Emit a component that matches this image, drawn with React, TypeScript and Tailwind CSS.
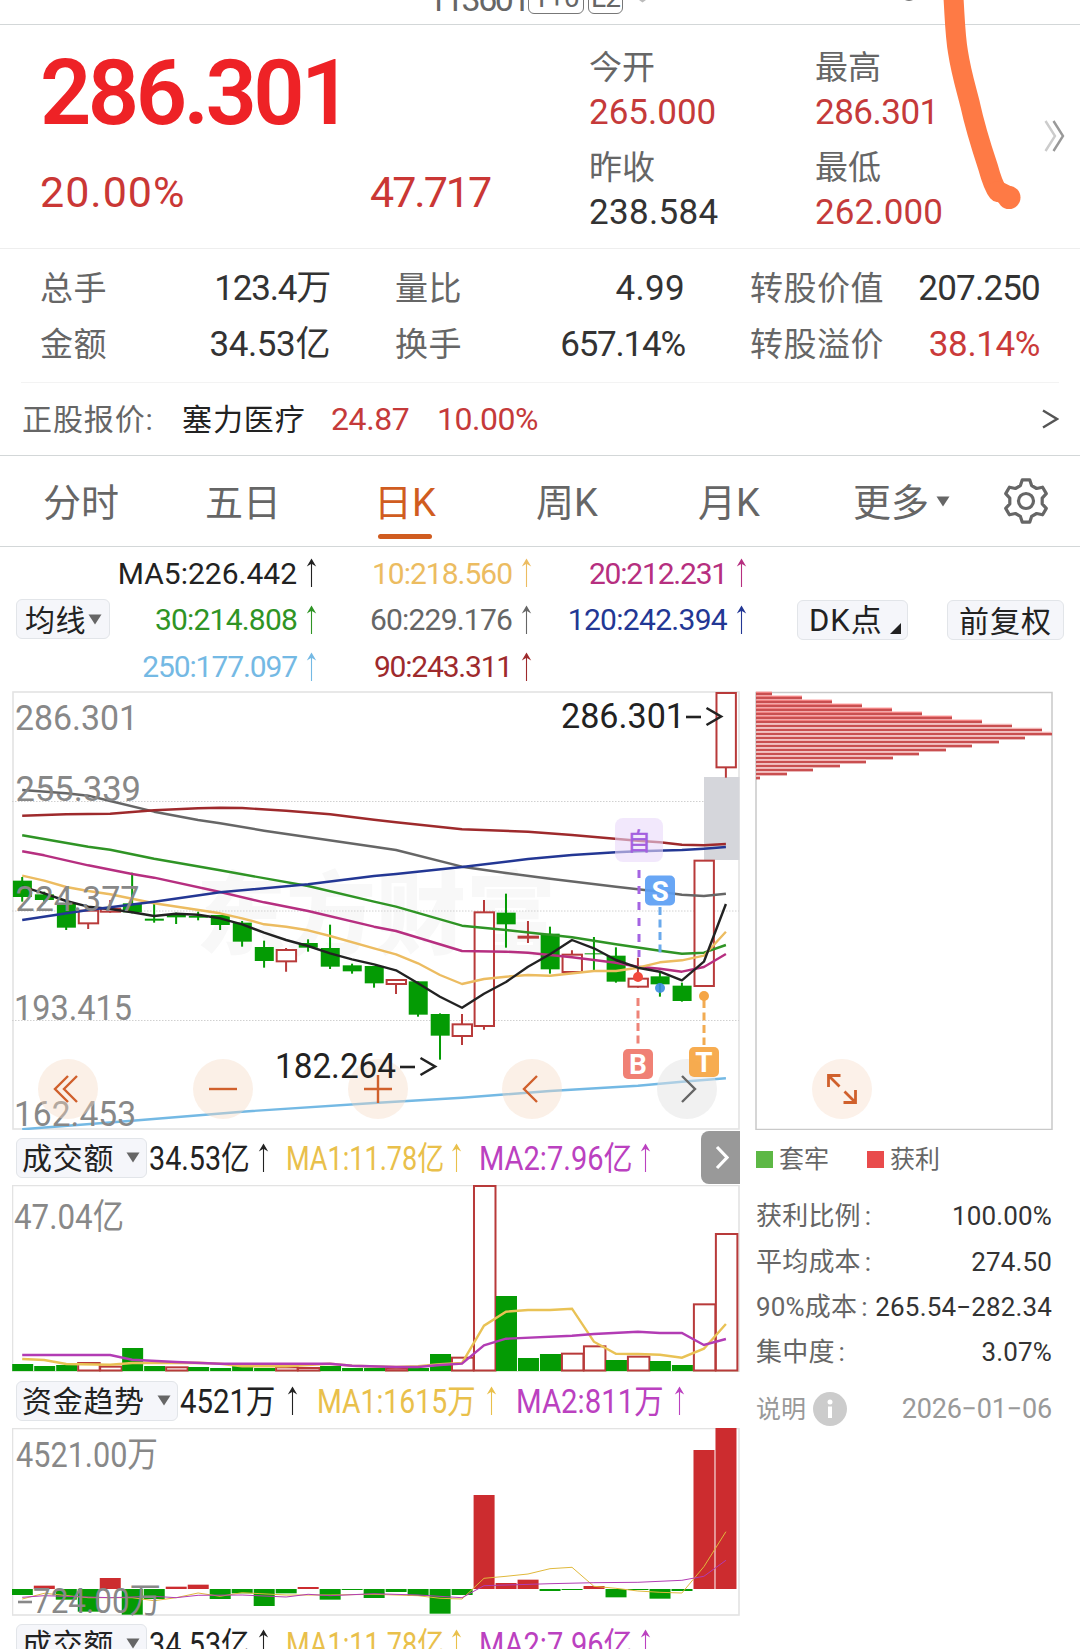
import React from 'react';

const X0 = 22.2;
const STEP = 21.99;
const cx = (i: number) => X0 + STEP * i;

type Candle = [color: 'g' | 'r', top: number, bottom: number, high: number, low: number];
type Point = [index: number, y: number];

const CANDLES: Candle[] = [
    ['g', 587, 636, 576, 650], ['g', 628, 645, 620, 655], ['g', 656, 728, 650, 735], ['r', 677, 715, 677, 732],
    ['r', 671, 680, 645, 683], ['g', 655, 682, 563, 685], ['g', 701, 707, 657, 713], ['g', 688, 697, 683, 717],
    ['g', 693, 698, 680, 706], ['g', 690, 720, 690, 735], ['g', 713, 770, 708, 785], ['g', 786, 828, 767, 848],
    ['r', 795, 829, 789, 860], ['g', 774, 788, 763, 800], ['g', 789, 845, 719, 852], ['g', 841, 859, 836, 866],
    ['g', 843, 895, 843, 908], ['r', 885, 897, 885, 927], ['g', 889, 989, 889, 995], ['g', 987, 1052, 985, 1124],
    ['r', 1018, 1053, 987, 1080], ['r', 682, 1023, 645, 1034], ['g', 683, 718, 626, 788], ['r', 755, 758, 708, 774],
    ['g', 746, 853, 725, 866], ['r', 809, 861, 796, 866], ['g', 805, 808, 756, 855], ['g', 812, 890, 787, 893],
    ['r', 881, 905, 818, 908], ['g', 874, 898, 860, 935], ['g', 902, 948, 893, 950], ['r', 527, 903, 527, 903],
    ['r', 24, 247, 24, 278],
];

const MA_LINES: { color: string; points: Point[] }[] = [
    { color: '#666666', points: [[0, 315], [2, 325], [3, 332], [4, 348], [6, 380], [8, 405], [9, 415], [11, 437], [16, 485], [17, 495], [20, 545], [22, 564], [24, 581], [27, 605], [29, 620], [30, 629], [31, 633], [32, 626]] },
    { color: '#9e2a2c', points: [[0, 392], [2, 388], [4, 386], [6, 376], [8, 370], [9, 368], [10, 369], [12, 377], [14, 388], [16, 404], [17, 412], [20, 433], [23, 440], [25, 450], [28, 467], [29, 472], [30, 479], [31, 481], [32, 477]] },
    { color: '#2f9425', points: [[0, 451], [3, 485], [4, 494], [6, 521], [9, 556], [13, 603], [16, 650], [17, 665], [20, 722], [22, 735], [25, 757], [27, 778], [29, 797], [30, 806], [31, 803], [32, 780]] },
    { color: '#b62f80', points: [[0, 499], [1, 511], [3, 541], [5, 567], [6, 578], [9, 621], [11, 652], [13, 678], [16, 725], [17, 738], [20, 798], [22, 800], [23, 803], [25, 817], [27, 833], [28, 845], [29, 851], [30, 860], [31, 846], [32, 807]] },
    { color: '#ecbc61', points: [[0, 572], [1, 587], [2, 606], [3, 618], [4, 628], [6, 655], [9, 685], [10, 700], [11, 718], [12, 725], [13, 736], [14, 753], [16, 790], [17, 808], [18, 835], [19, 870], [20, 897], [21, 882], [22, 875], [23, 870], [24, 872], [26, 858], [27, 858], [28, 848], [29, 832], [30, 826], [31, 812], [32, 740]] },
    { color: '#222222', points: [[0, 605], [1, 625], [2, 648], [3, 665], [4, 672], [5, 682], [6, 693], [7, 686], [8, 689], [9, 700], [10, 718], [11, 743], [12, 765], [13, 783], [14, 805], [15, 823], [16, 838], [17, 856], [18, 895], [19, 935], [20, 968], [21, 926], [22, 891], [23, 845], [24, 808], [25, 765], [26, 790], [27, 825], [28, 848], [29, 860], [30, 886], [31, 830], [32, 657]] },
    { color: '#233794', points: [[0, 705], [3, 675], [6, 650], [9, 622], [13, 598], [16, 573], [17, 567], [20, 546], [23, 522], [25, 510], [27, 502], [28, 499], [30, 495], [31, 491], [32, 486]] },
    { color: '#74b9e4', points: [[0, 1333], [5, 1307], [10, 1280], [16, 1254], [20, 1238], [24, 1218], [28, 1202], [30, 1190], [32, 1180]] },
];

const VOLUMES: ['g' | 'r', number][] = [
    ['g', 717], ['g', 723], ['g', 720], ['r', 711], ['r', 722], ['g', 669], ['g', 723], ['r', 724], ['g', 726], ['g', 729], ['g', 723],
    ['g', 729], ['r', 724], ['r', 726], ['g', 723], ['g', 729], ['g', 729], ['r', 727], ['g', 729], ['g', 687], ['r', 695], ['r', 180],
    ['g', 513], ['g', 699], ['g', 687], ['r', 683], ['r', 661], ['g', 705], ['r', 692], ['g', 708], ['g', 720], ['r', 535], ['r', 324],
];

const VOLUME_MA1: Point[] = [[0, 702], [1, 705], [2, 717], [4, 719], [5, 714], [8, 713], [9, 716], [10, 724], [12, 724], [14, 716], [15, 722], [17, 726], [18, 724], [19, 718], [20, 714], [21, 602], [22, 560], [23, 555], [24, 555], [25, 551], [26, 650], [27, 686], [28, 687], [29, 689], [30, 698], [31, 671], [32, 597]];
const VOLUME_MA2: Point[] = [[0, 690], [4, 690], [5, 704], [7, 711], [9, 716], [14, 716], [15, 722], [17, 726], [18, 726], [19, 720], [20, 716], [21, 661], [22, 641], [25, 632], [26, 627], [28, 620], [29, 624], [30, 624], [31, 660], [32, 642]];

const FUNDS = [660, 632, 674, 710, 609, 719, 672, 635, 629, 672, 655, 693, 655, 636, 674, 645, 669, 651, 663, 716, 660, 360, 624, 614, 648, 644, 633, 667, 644, 671, 648, 225, 159];
const FUNDS_MA1: Point[] = [[0, 672], [1, 655], [3, 668], [5, 668], [6, 677], [7, 668], [8, 654], [9, 664], [10, 653], [12, 660], [14, 660], [16, 658], [18, 662], [19, 670], [20, 672], [21, 610], [22, 604], [23, 597], [24, 581], [25, 577], [26, 634], [27, 640], [28, 648], [29, 652], [30, 654], [31, 575], [32, 470]];
const FUNDS_MA2: Point[] = [[0, 667], [1, 662], [4, 668], [6, 664], [7, 668], [8, 661], [10, 660], [12, 666], [13, 658], [14, 662], [16, 656], [18, 660], [20, 668], [21, 632], [24, 626], [26, 623], [28, 622], [30, 616], [31, 604], [32, 556]];

const CHIP_WIDTHS = [16, 46, 76, 106, 136, 166, 196, 226, 256, 286, 296, 269, 243, 216, 190, 163, 137, 110, 84, 57, 31, 4];

const toPath = (points: Point[], base: number) => points.map(([i, y]) => `${cx(i).toFixed(1)},${(y / 3 + base).toFixed(1)}`).join(' ');

const UpArrow = ({ className = '' }: { className?: string }) => (
    <svg className={`shrink-0 ${className}`} width="13" height="30" viewBox="0 0 13 30">
        <path d="M6.5 2V29" stroke="currentColor" strokeWidth="1.1" />
        <path d="M6.5 0.5L11.2 8.5L6.5 5.8L1.8 8.5Z" fill="currentColor" />
    </svg>
);

const Caret = ({ className = '' }: { className?: string }) => (
    <svg className={`shrink-0 ${className}`} width="14" height="11" viewBox="0 0 14 11">
        <path d="M0.5 0.5H13.5L7 10.5Z" fill="#666" />
    </svg>
);

interface QuoteProps {
    label: string;
    value: string;
    className: string;
}

const Quote: React.FC<QuoteProps> = ({ label, value, className }) => (
    <div className="h-[100px]">
        <div className="h-[49px] leading-[49px] text-[33px] text-[#666]">{label}</div>
        <div className={`h-[41px] leading-[41px] text-[35px] ${className}`}>{value}</div>
    </div>
);

const Stat: React.FC<QuoteProps> = ({ label, value, className }) => (
    <div className="flex h-14 items-center justify-between whitespace-nowrap leading-[56px]">
        <span className="text-[33px] tracking-[0.5px] text-[#666]">{label}</span>
        <span className={`text-[35px] ${className}`}>{value}</span>
    </div>
);

const MaValue = ({ text, className }: { text: string; className: string }) => (
    <div className={`flex items-center justify-end whitespace-nowrap text-[30px] ${className}`}>
        <span>{text}</span>
        <UpArrow className="ml-[8px]" />
    </div>
);

interface IndicatorValue {
    text: string;
    width: string;
    scale: string;
    color: string;
}

interface IndicatorBarProps {
    title: string;
    values: IndicatorValue[];
    gap: string;
    arrowGap: string;
    expandable?: boolean;
}

const IndicatorBar: React.FC<IndicatorBarProps> = ({ title, values, gap, arrowGap, expandable }) => (
    <div className="flex h-[55px] shrink-0 items-center whitespace-nowrap">
        <button className="ml-[4px] mr-[2px] flex h-10 shrink-0 items-center gap-[12px] rounded-md border border-[#e2e5e9] bg-[#f5f6fa] pl-[5px] pr-[6px] text-[30px] tracking-[0.7px] text-[#222]">
            <span className="pt-[2px]">{title}</span>
            <Caret />
        </button>
        <div className={`flex items-center pt-px ${gap}`}>
            {values.map(v => (
                <div key={v.text} className={`flex items-center ${arrowGap} ${v.color}`}>
                    <span className={v.width}>
                        <span className={`inline-block origin-left pt-px text-[33px] leading-[40px] ${v.scale}`}>{v.text}</span>
                    </span>
                    <UpArrow />
                </div>
            ))}
        </div>
        {expandable && (
            <button className="ml-auto flex h-[53px] w-[39px] shrink-0 items-center justify-center rounded-l-lg bg-[#999]">
                <svg width="16" height="25" viewBox="0 0 16 25" fill="none">
                    <path d="M4 2L14 12.5L4 23" stroke="#fff" strokeWidth="3.2" />
                </svg>
            </button>
        )}
    </div>
);

const TURNOVER: IndicatorValue[] = [
    { text: '34.53亿', width: 'w-[101px]', scale: 'scale-x-[0.87]', color: 'text-[#222]' },
    { text: 'MA1:11.78亿', width: 'w-[157px]', scale: 'scale-x-[0.82]', color: 'text-[#e9c04b]' },
    { text: 'MA2:7.96亿', width: 'w-[153px]', scale: 'scale-x-[0.88]', color: 'text-[#bb41c0]' },
];

const FUND_TREND: IndicatorValue[] = [
    { text: '4521万', width: 'w-[96px]', scale: 'scale-x-[0.89]', color: 'text-[#222]' },
    { text: 'MA1:1615万', width: 'w-[158px]', scale: 'scale-x-[0.86]', color: 'text-[#e9c04b]' },
    { text: 'MA2:811万', width: 'w-[147px]', scale: 'scale-x-[0.89]', color: 'text-[#bb41c0]' },
];

const AxisLabel = ({ x, y, w, children, fill = '#888' }: { x: number; y: number; w: number; children: string; fill?: string }) => (
    <text x={x} y={y} fontSize="35" textLength={w} lengthAdjust="spacingAndGlyphs" fill={fill}>{children}</text>
);

const Marker = ({ x, y, fill, children }: { x: number; y: number; fill: string; children: string }) => (
    <g>
        <rect x={x - 15} y={y - 15} width="30" height="30" rx="5" fill={fill} fillOpacity="0.93" />
        <text x={x} y={y + 10} fontSize="28" fontWeight="700" textAnchor="middle" fill="#fff">{children}</text>
    </g>
);

const PriceChart = () => (
    <svg className="block shrink-0" width="728" height="439" viewBox="12 691 728 439" fill="none">
        <text x="196" y="947" fontSize="90" fontWeight="900" fill="#f8f8f8">东方财富</text>
        <rect x="13" y="692" width="726" height="437" stroke="#e3e3e3" strokeWidth="1.6" />
        {[801.5, 911, 1020.5].map(y => (
            <path key={y} d={`M12 ${y}H739`} stroke="#d0d0d0" strokeDasharray="1.5 1.5" />
        ))}
        <rect x="704" y="777" width="35.5" height="83" fill="#d5d6db" />
        {CANDLES.map(([color, top, bottom, high, low], i) => {
            const x = cx(i);
            const [t, b, h, l] = [top, bottom, high, low].map(v => v / 3 + 685);
            return color === 'g' ? (
                <g key={i} fill="#049b04">
                    <rect x={x - 1} y={h} width="2" height={l - h} />
                    <rect x={x - 9.3} y={t} width="19" height={b - t} />
                </g>
            ) : (
                <g key={i} stroke="#b83a3a" strokeWidth="2">
                    <path d={`M${x} ${h}V${t}M${x} ${b}V${l}`} />
                    <rect x={x - 9.4} y={t} width="19.4" height={b - t} fill="#fff" />
                </g>
            );
        })}
        {MA_LINES.map(line => (
            <polyline key={line.color} points={toPath(line.points, 685)} stroke={line.color} strokeWidth="2.4" strokeLinejoin="round" />
        ))}

        <AxisLabel x={15} y={730} w={123}>286.301</AxisLabel>
        <AxisLabel x={15.5} y={801} w={125.5}>255.339</AxisLabel>
        <AxisLabel x={15.5} y={911} w={124}>224.377</AxisLabel>
        <AxisLabel x={14} y={1020} w={118}>193.415</AxisLabel>
        <AxisLabel x={14} y={1126} w={122}>162.453</AxisLabel>

        {[68, 223, 378, 532].map(x => (
            <circle key={x} cx={x} cy="1089" r="30" fill="#f6d9c4" fillOpacity="0.4" />
        ))}
        <circle cx="687" cy="1089" r="30" fill="#e4e4e4" fillOpacity="0.5" />

        <AxisLabel x={275} y={1078} w={121} fill="#222">182.264</AxisLabel>
        <path d="M400 1067H415" stroke="#222" strokeWidth="2.6" />
        <path d="M420.500 1058L435 1066.500L420.500 1075" stroke="#222" strokeWidth="2.6" />
        <AxisLabel x={561} y={728} w={124} fill="#222">286.301</AxisLabel>
        <path d="M686 717H701" stroke="#222" strokeWidth="2.6" />
        <path d="M706.500 708L721 716.500L706.500 725" stroke="#222" strokeWidth="2.6" />

        <g stroke="#d0602c" strokeWidth="2.4">
            <path d="M68 1076L55 1089L68 1102M77 1076L64 1089L77 1102" />
            <path d="M209 1089H237" />
            <path d="M364 1089H392M378 1075V1103" />
            <path d="M537 1076L524 1089L537 1102" />
        </g>
        <path d="M682 1076L695 1089L682 1102" stroke="#666" strokeWidth="2.4" />

        <rect x="615" y="818" width="48" height="44" rx="8" fill="#e9d8fa" fillOpacity="0.6" />
        <text x="639" y="849.500" fontSize="24" textAnchor="middle" fill="#a35fdf" stroke="#a35fdf" strokeWidth="0.500">自</text>
        <path d="M639 870V957" stroke="#a464e2" strokeWidth="3" strokeDasharray="8 8" />
        <path d="M660 907V957" stroke="#6aa9ec" strokeWidth="3" strokeDasharray="8 4.500" />
        <path d="M638 998V1047" stroke="#ee8378" strokeWidth="3" strokeDasharray="8 4.500" />
        <path d="M704 1000V1045" stroke="#f2ab52" strokeWidth="3" strokeDasharray="8 4.500" />
        <circle cx="638" cy="977" r="5" fill="#f2483c" />
        <circle cx="660" cy="988" r="5" fill="#3b8de0" fillOpacity="0.9" />
        <circle cx="704" cy="996" r="5" fill="#f5a545" />
        <Marker x={660} y={890.5} fill="#5c9ff4">S</Marker>
        <Marker x={638} y={1064} fill="#ef776a">B</Marker>
        <Marker x={704} y={1062} fill="#f6a643">T</Marker>
    </svg>
);

const VolumeChart = () => (
    <svg className="block shrink-0" width="728" height="187" viewBox="12 1185 728 187" fill="none">
        <path d="M12.500 1372V1185.500H739V1372" stroke="#e3e3e3" strokeWidth="1.6" />
        <path d="M12 1371.500H739" stroke="#d9e8d5" />
        <AxisLabel x={14} y={1229} w={110}>47.04亿</AxisLabel>
        {VOLUMES.map(([color, v], i) => {
            const y = v / 3 + 1125;
            return color === 'g' ? (
                <rect key={i} x={cx(i) - 10} y={y} width="21" height={1371 - y} fill="#049b04" />
            ) : (
                <rect key={i} x={cx(i) - 10} y={y + 1} width="21.500" height={1369.5 - y} stroke="#b83a3a" strokeWidth="2" fill="#fff" />
            );
        })}
        <polyline points={toPath(VOLUME_MA1, 1125)} stroke="#e9c255" strokeWidth="2.4" />
        <polyline points={toPath(VOLUME_MA2, 1125)} stroke="#b23cb4" strokeWidth="2.4" />
    </svg>
);

const FundChart = () => (
    <svg className="block shrink-0" width="728" height="188" viewBox="12 1428 728 188" fill="none">
        <rect x="12.500" y="1428.500" width="726.500" height="186.500" stroke="#e3e3e3" strokeWidth="1.6" />
        {FUNDS.map((v, i) => {
            const y = v / 3 + 1375;
            return v > 642
                ? <rect key={i} x={cx(i) - 10.4} y="1589" width="21" height={Math.max(y - 1589, 1)} fill="#049b04" />
                : <rect key={i} x={cx(i) - 10.4} y={y} width="21" height={1589 - y} fill="#cc2c2f" />;
        })}
        <polyline points={toPath(FUNDS_MA1, 1375)} stroke="#e0b93c" strokeWidth="1" />
        <polyline points={toPath(FUNDS_MA2, 1375)} stroke="#b23cb4" strokeWidth="1" />
        <AxisLabel x={16} y={1467} w={142}>4521.00万</AxisLabel>
        <AxisLabel x={33} y={1613} w={128}>724.00万</AxisLabel>
        <path d="M18 1602H32" stroke="#888" strokeWidth="2.6" />
    </svg>
);

const ChipPanel = () => (
    <div className="ml-[15px] flex w-[298px] flex-col">
        <svg className="block shrink-0" width="298" height="439" viewBox="755 691 298 439" fill="none">
            <path d="M756 1129.500V692.500H1052V1129.500Z" stroke="#c9c9c9" strokeWidth="1.5" />
            {CHIP_WIDTHS.map((w, i) => (
                <g key={i}>
                    <rect x="756" y={691.6 + i * 4} width={w} height="1.400" fill={i < 8 ? '#fc8f8f' : '#fbd0d0'} />
                    <rect x="756" y={692.8 + i * 4} width={w} height="2.600" fill="#c94f50" />
                </g>
            ))}
            <circle cx="842" cy="1089" r="30" fill="#fcf1e9" />
            <path d="M828.500 1087V1075.500H840.500M829 1076L839.500 1086.500M855.500 1090V1102.500H843.500M855 1102L844.500 1091.500" stroke="#d0602c" strokeWidth="2.8" />
        </svg>
        <div className="mt-[15px] flex h-[28px] items-center pl-px text-[25px] leading-[28px] text-[#666]">
            <i className="size-[17px] bg-[#5db845]" />
            <span className="ml-[6px] w-[88px] pt-[2px]">套牢</span>
            <i className="size-[17px] bg-[#e94b4c]" />
            <span className="ml-[6px] pt-[2px]">获利</span>
        </div>
        <div className="mt-[21px] flex flex-col pl-px pr-px text-[26px] text-[#333]">
            {[
                ['获利比例', '100.00%'],
                ['平均成本', '274.50'],
                ['90%成本', '265.54−282.34'],
                ['集中度', '3.07%'],
            ].map(([label, value]) => (
                <div key={label} className="flex h-[45.400px] items-center justify-between whitespace-nowrap">
                    <span className="tracking-[0.200px] text-[#666]">{label}<span className="ml-[4px]">:</span></span>
                    <span className="tracking-[0.150px]">{value}</span>
                </div>
            ))}
        </div>
        <div className="mt-[13px] flex h-[40px] items-center pl-px pr-px text-[25px] text-[#999]">
            <span className="pt-[2px]">说明</span>
            <svg className="ml-[7px]" width="34" height="34" viewBox="0 0 34 34">
                <circle cx="17" cy="17" r="17" fill="#ccc" />
                <circle cx="17" cy="10" r="2.500" fill="#fff" />
                <path d="M17 14.500V26" stroke="#fff" strokeWidth="4" />
            </svg>
            <span className="ml-auto pt-[2px] text-[27px] tracking-[-0.200px]">2026−01−06</span>
        </div>
    </div>
);

const TABS = ['分时', '五日', '日K', '周K', '月K'];

const App: React.FC = () => (
    <div className="relative flex h-[1649px] w-[1080px] flex-col overflow-hidden bg-white font-[Roboto,'Noto_Sans_CJK_SC',sans-serif]">
        <header className="relative h-[25px] shrink-0 overflow-hidden border-b border-[#d3d7d8] text-[#666]">
            <div className="absolute bottom-[10px] left-[428px] flex items-end">
                <span className="h-[34px] w-[100px] text-[34px] leading-[38px] tracking-[-2.400px]">113601</span>
                <span className="h-[38px] w-[56px] rounded-md border border-[#777] text-center text-[28px] leading-[42px] tracking-[-1px]">T+0</span>
                <span className="ml-[4px] h-[38px] w-[35px] rounded-md border border-[#777] text-center text-[28px] leading-[42px] tracking-[-1px]">L2</span>
            </div>
            <svg className="absolute left-[636px] top-0" width="280" height="3" viewBox="0 0 280 3">
                <path d="M3 0H10L6.500 2.500Z" fill="#bbb" />
                <path d="M269 0H277Q273 1.500 269 0Z" fill="#444" />
            </svg>
        </header>

        <section className="flex h-[224px] shrink-0 border-b border-[#eeeeee]">
            <div className="w-[589px] pl-[40px] pt-[3px]">
                <div className="h-[130px] text-[90px] font-semibold leading-[132px] tracking-[-3.600px] text-[#ee2226]">286.301</div>
                <div className="flex h-[69px] text-[43px] leading-[69px] text-[#ca3735]">
                    <span className="w-[330px] tracking-[1px]">20.00%</span>
                    <span className="tracking-[-2px]">47.717</span>
                </div>
            </div>
            <div className="w-[225px] pt-[18px]">
                <Quote label="今开" value="265.000" className="text-[#c53a3a]" />
                <Quote label="昨收" value="238.584" className="tracking-[0.300px] text-[#333]" />
            </div>
            <div className="w-[230px] pt-[18px] pl-px">
                <Quote label="最高" value="286.301" className="text-[#c53a3a] tracking-[-0.500px]" />
                <Quote label="最低" value="262.000" className="text-[#c53a3a] tracking-[0.100px]" />
            </div>
            <svg className="mt-[94px]" width="22" height="34" viewBox="0 0 22 34" fill="none">
                <path d="M1.500 2L11 17L1.500 32" stroke="#ccc" strokeWidth="2.400" />
                <path d="M9.500 2L19 17L9.500 32" stroke="#999" strokeWidth="2.400" />
            </svg>
        </section>

        <section className="mx-[21px] grid h-[134px] shrink-0 grid-cols-3 content-start gap-x-[65px] border-b border-[#f3f3f3] pl-[19px] pr-[19px] pt-[12px]">
            <Stat label="总手" value="123.4万" className="tracking-[-1.200px] text-[#333]" />
            <Stat label="量比" value="4.99" className="tracking-[0.300px] text-[#333]" />
            <Stat label="转股价值" value="207.250" className="tracking-[-0.800px] text-[#333]" />
            <Stat label="金额" value="34.53亿" className="tracking-[-0.400px] text-[#333]" />
            <Stat label="换手" value="657.14%" className="tracking-[-1.200px] text-[#333]" />
            <Stat label="转股溢价" value="38.14%" className="tracking-[-0.400px] text-[#ca3a3a]" />
        </section>

        <section className="flex h-[73px] shrink-0 items-center border-b border-[#d3d7d8] pl-[22px] pr-[21px] text-[30px]">
            <span className="w-[160px] tracking-[0.900px] text-[#666]">正股报价:</span>
            <span className="w-[149px] tracking-[0.900px] text-[#222]">塞力医疗</span>
            <span className="w-[106px] text-[32px] tracking-[-0.400px] text-[#c53a3a]">24.87</span>
            <span className="text-[32px] tracking-[-0.500px] text-[#c53a3a]">10.00%</span>
            <svg className="ml-auto" width="17" height="20" viewBox="0 0 17 20" fill="none">
                <path d="M1 1.500L15 10L1 18.500" stroke="#555" strokeWidth="2.400" />
            </svg>
        </section>

        <nav className="flex h-[91px] shrink-0 border-b border-[#d3d7d8] text-[38px] text-[#666]">
            {TABS.map(tab => (
                <button key={tab} className={`relative w-[162px] pt-[5px] ${tab === '日K' ? 'text-[#d05c20]' : ''}`}>
                    {tab}
                    {tab === '日K' && <span className="absolute bottom-[7px] left-[54px] h-[5px] w-[54px] rounded-full bg-[#d05c20]" />}
                </button>
            ))}
            <button className="flex w-[193px] items-center gap-[7px] pl-[43px]">
                <span className="pt-[5px]">更多</span>
                <Caret />
            </button>
            <svg className="mt-[22px]" width="46" height="46" viewBox="0 0 46 46" fill="none" stroke="#666" strokeWidth="3.200" strokeLinejoin="round">
                <path d="M19.300 1.800H26.700L28.600 7.600L33.600 10.500L39.600 9.200L43.300 15.600L39.200 20.100V25.900L43.300 30.400L39.600 36.800L33.600 35.500L28.600 38.400L26.700 44.200H19.300L17.400 38.400L12.400 35.500L6.400 36.800L2.700 30.400L6.800 25.900V20.100L2.700 15.600L6.400 9.200L12.400 10.500L17.400 7.600Z" />
                <circle cx="23" cy="23" r="7.500" />
            </svg>
        </nav>

        <section className="flex h-[144px] shrink-0 pl-[16px] text-[#222]">
            <button className="mt-[52px] flex h-10 w-[94px] shrink-0 items-center gap-[2px] rounded-md border border-[#e2e5e9] bg-[#f5f6fa] pl-[8px] text-[30px] tracking-[0.500px]">
                <span className="pt-[3px]">均线</span>
                <Caret />
            </button>
            <div className="grid h-[144px] grid-cols-[208px_215px_215px] grid-rows-3 pb-px pt-[3px]">
                <MaValue text="MA5:226.442" className="text-[#222]" />
                <MaValue text="10:218.560" className="tracking-[-1px] text-[#ecbc61]" />
                <MaValue text="20:212.231" className="tracking-[-1.200px] text-[#b62f80]" />
                <MaValue text="30:214.808" className="tracking-[-0.800px] text-[#2f9425]" />
                <MaValue text="60:229.176" className="tracking-[-0.800px] text-[#666]" />
                <MaValue text="120:242.394" className="tracking-[-0.700px] text-[#233794]" />
                <MaValue text="250:177.097" className="tracking-[-1.100px] text-[#74b9e4]" />
                <MaValue text="90:243.311" className="tracking-[-1.200px] text-[#9e2a2c]" />
            </div>
            <button className="ml-[49px] mt-[53px] flex h-10 w-[111px] shrink-0 items-center rounded-md border border-[#e2e5e9] bg-[#f5f6fa] pl-[11px] text-[31px] tracking-[1px]">
                <span className="pt-[2px]">DK点</span>
                <svg className="ml-[7px] mt-[16px]" width="11" height="11" viewBox="0 0 11 11">
                    <path d="M11 0V11H0Z" fill="#222" />
                </svg>
            </button>
            <button className="ml-[39px] mt-[53px] h-10 w-[117px] shrink-0 rounded-md border border-[#e2e5e9] bg-[#f5f6fa] text-[30px] leading-[41px] tracking-[1px]">
                前复权
            </button>
        </section>

        <main className="flex pl-[12px]">
            <div className="flex w-[728px] flex-col">
                <PriceChart />
                <IndicatorBar title="成交额" values={TURNOVER} gap="gap-[16px]" arrowGap="gap-[7px]" expandable />
                <VolumeChart />
                <div className="h-px shrink-0" />
                <IndicatorBar title="资金趋势" values={FUND_TREND} gap="gap-[18px]" arrowGap="gap-[10px]" />
                <FundChart />
                <IndicatorBar title="成交额" values={TURNOVER} gap="gap-[16px]" arrowGap="gap-[7px]" />
            </div>
            <ChipPanel />
        </main>

        <svg className="absolute left-[930px] top-0" width="100" height="212" viewBox="930 0 100 212" fill="none">
            <path d="M953 -10C955 20 955 35 958 52C961 72 966 88 970 104C975 127 981 146 988 167C991 178 994 187 998 192" stroke="#fe7a45" strokeWidth="20" strokeLinecap="round" />
            <circle cx="1009" cy="197.500" r="11.500" fill="#fe7a45" />
            <path d="M998 191L1008 196" stroke="#fe7a45" strokeWidth="20" strokeLinecap="round" />
        </svg>
    </div>
);

export default App;
